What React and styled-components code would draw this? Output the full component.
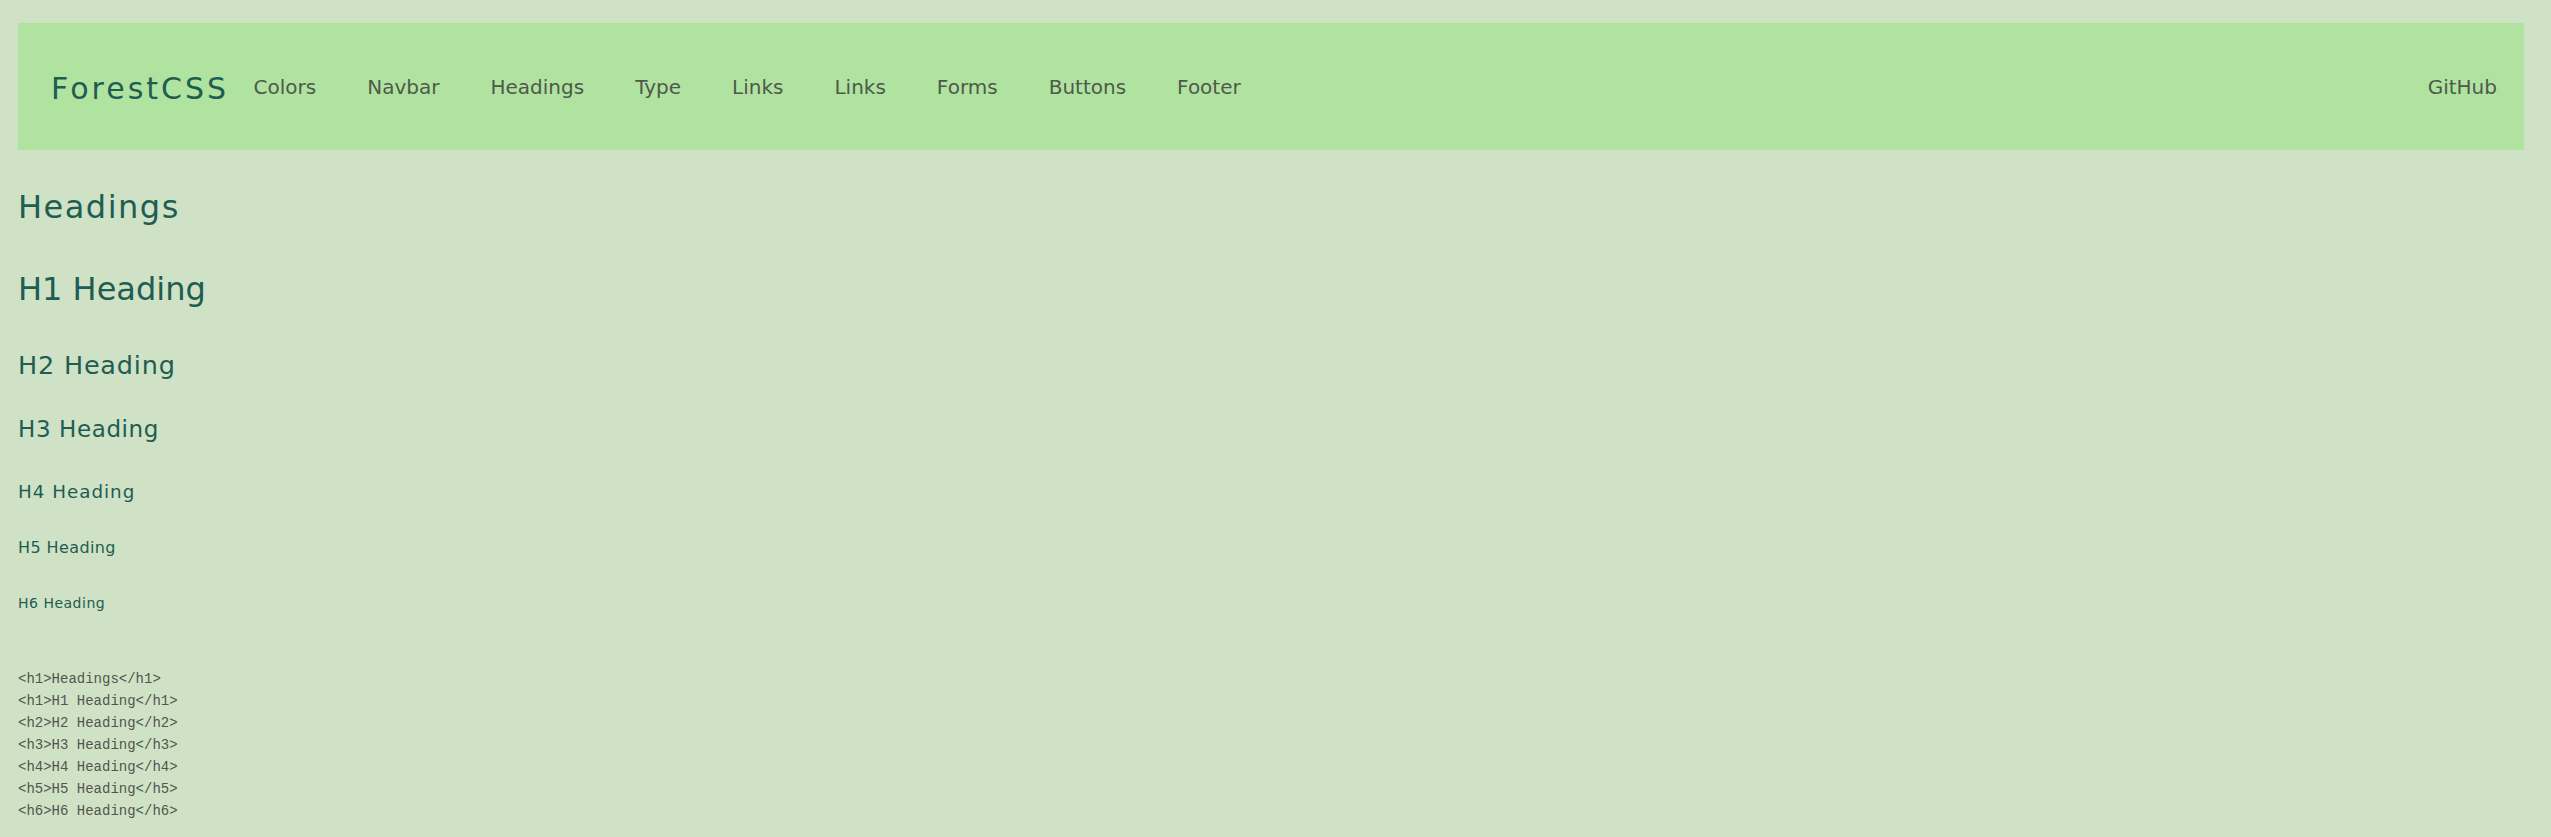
import React from 'react'
import styled, {createGlobalStyle} from "styled-components";

const links = ["Colors", "Navbar", "Headings", "Type", "Links", "Links", "Forms", "Buttons", "Footer"]

const headings = [
  {tag: "h1", text: "H1 Heading", size: 32, spacing: 0, gap: 43.6},
  {tag: "h2", text: "H2 Heading", size: 25.5, spacing: 0.8, gap: 41.8},
  {tag: "h3", text: "H3 Heading", size: 23, spacing: 0.6, gap: 35.7},
  {tag: "h4", text: "H4 Heading", size: 18.3, spacing: 1, gap: 36.9},
  {tag: "h5", text: "H5 Heading", size: 16, spacing: 0.4, gap: 35.2},
  {tag: "h6", text: "H6 Heading", size: 14, spacing: 0.5, gap: 37.7},
]

const code = [
  "<h1>Headings</h1>",
  "<h1>H1 Heading</h1>",
  "<h2>H2 Heading</h2>",
  "<h3>H3 Heading</h3>",
  "<h4>H4 Heading</h4>",
  "<h5>H5 Heading</h5>",
  "<h6>H6 Heading</h6>",
]

function App() {
  return (
    <Page>
      <GlobalStyle />
      <Navbar>
        <Brand href="#">ForestCSS</Brand>
        <NavLinks>
          {links.map((link, i) => (
            <NavLink key={i} href="#">{link}</NavLink>
          ))}
        </NavLinks>
        <NavLink href="#" $end>GitHub</NavLink>
      </Navbar>
      <Section>
        <Title>Headings</Title>
        {headings.map((h) => (
          <Heading key={h.tag} as={h.tag} $size={h.size} $spacing={h.spacing} $gap={h.gap}>
            {h.text}
          </Heading>
        ))}
        <Code>
          {code.map((line, i) => (
            <CodeLine key={i}>{line}</CodeLine>
          ))}
        </Code>
      </Section>
    </Page>
  );
}

const GlobalStyle = createGlobalStyle`
html, body {
  margin: 0;
  background-color: #d0e2c6;
}
body {
  font-family: "DejaVu Sans", sans-serif;
}
`

const Page = styled.div`
padding: 23px 27px 0 18px;
`

const Navbar = styled.nav`
display: flex;
align-items: center;
height: 127px;
padding: 0 27px 0 33px;
background-color: #b0e3a0;
`

const Brand = styled.a`
font-size: 30px;
letter-spacing: 3px;
color: #1e5d52;
text-decoration: none;
margin-top: 4px;
`

const NavLinks = styled.div`
display: flex;
flex: 1;
margin-left: -1px;
`

const NavLink = styled.a`
font-size: 20px;
color: #4d5a4a;
text-decoration: none;
padding: 0 ${props => props.$end ? "0" : "25.5px"};
`

const Section = styled.main`
display: flex;
flex-direction: column;
align-items: flex-start;
`

const Title = styled.h1`
font-size: 32px;
font-weight: normal;
letter-spacing: 1.5px;
line-height: 1.2;
color: #1e5d52;
margin: 37.7px 0 0;
`

const Heading = styled.h1`
font-size: ${props => props.$size}px;
letter-spacing: ${props => props.$spacing}px;
font-weight: normal;
line-height: 1.2;
color: #1e5d52;
margin: ${props => props.$gap}px 0 0;
`

const Code = styled.pre`
margin: 56.7px 0 0;
font-family: "Liberation Mono", monospace;
font-size: 14px;
line-height: 22px;
color: #50554e;
`

const CodeLine = styled.div``

export default App
